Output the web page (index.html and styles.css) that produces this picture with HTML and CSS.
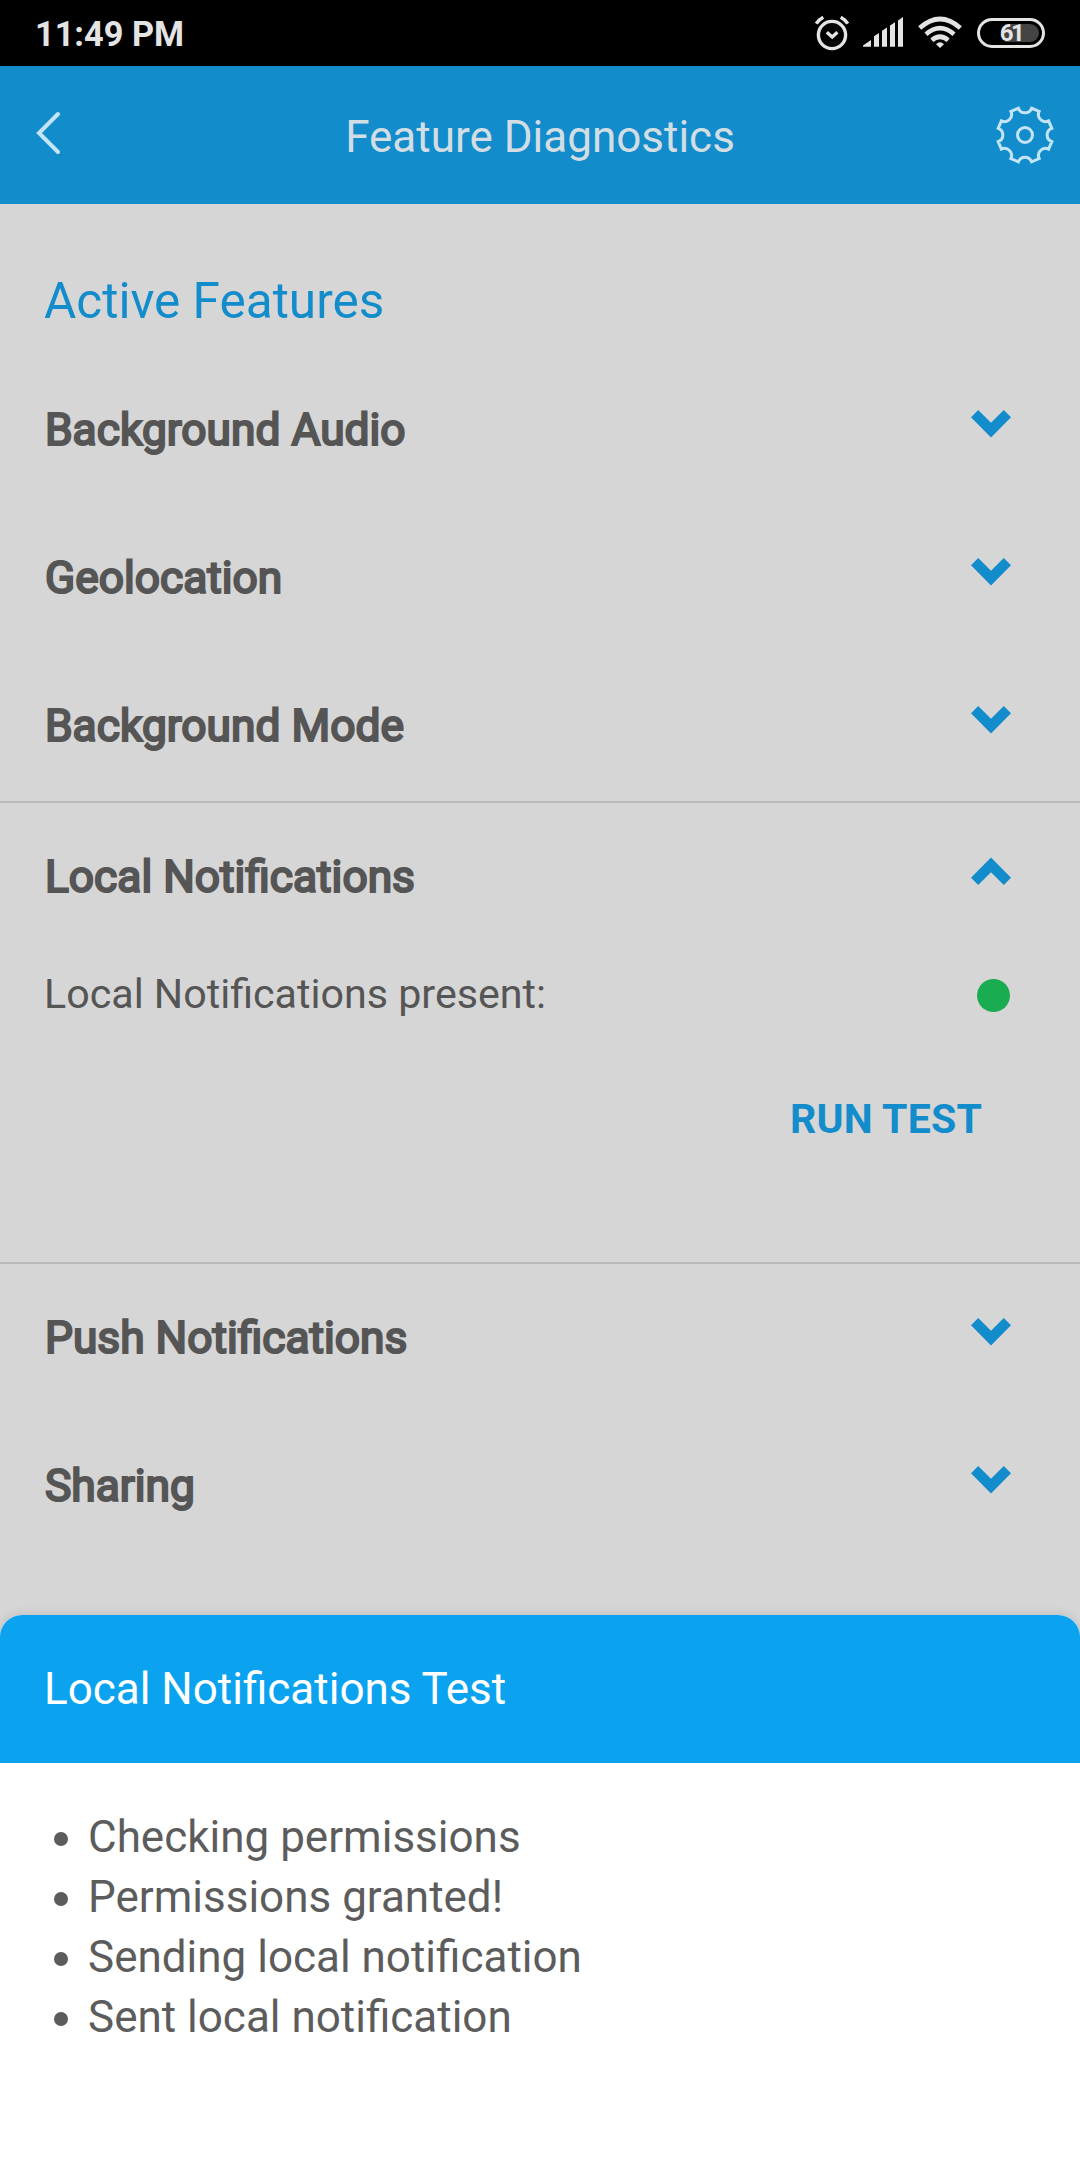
FILE: index.html
```html
<!DOCTYPE html>
<html lang="en">
  <head>
    <meta charset="UTF-8" />
    <meta name="viewport" content="width=device-width, initial-scale=1.0" />
    <title>Feature Diagnostics</title>
    <link rel="stylesheet" href="styles.css">
  </head>
  <body>
    <div class="status-bar">
      <span class="time">11:49 PM</span>
      <div class="status-icons">
        <svg class="alarm" width="36" height="36" viewBox="0 0 36 36">
          <circle cx="18" cy="20" r="13.6" />
          <path d="M2.2 8.6Q5 4.5 9.3 2.2M33.8 8.6Q31 4.5 26.7 2.2" />
          <path d="M12.8 17.2l5.4 4.8 5.2-4.8" />
        </svg>
        <svg class="signal" width="40" height="36" viewBox="0 0 40 36">
          <path d="M0 31.7V30.5L8 25v6.7zM11 31.7V21.2l5-3.2v13.7zM19 31.7V15.8l5-3.3v19.2zM27 31.7V10.5l5-3.3v24.5zM35 31.7V5.5l5-3.5v29.7z" />
        </svg>
        <svg class="wifi" width="44" height="36" viewBox="0 0 44 36">
          <path d="M1.7 13Q22-5 42.3 13" />
          <path d="M8 19.3Q22 7 36 19.3" />
          <path d="M13.8 25.2Q22 18.3 30.2 25.2" />
          <path class="dot" d="M18 29.3Q22 25.2 26 29.3L22 33z" />
        </svg>
        <div class="battery">
          <div class="level"></div>
          <span class="percent">61</span>
        </div>
      </div>
    </div>

    <header class="toolbar">
      <svg class="back" width="26" height="44" viewBox="0 0 26 44">
        <path d="M23 3L4 22l19 19" />
      </svg>
      <h1>Feature Diagnostics</h1>
      <svg class="settings" width="60" height="60" viewBox="-30 -30 60 60">
        <path d="M6.6-26.8L14.2-23.6A7 7 0 0 0 23.6-14.2L26.8-6.6A7 7 0 0 0 26.8 6.6L23.6 14.2A7 7 0 0 0 14.2 23.6L6.6 26.8A7 7 0 0 0-6.6 26.8L-14.2 23.6A7 7 0 0 0-23.6 14.2L-26.8 6.6A7 7 0 0 0-26.8-6.6L-23.6-14.2A7 7 0 0 0-14.2-23.6L-6.6-26.8A7 7 0 0 0 6.6-26.8z" />
        <circle r="7.5" />
      </svg>
    </header>

    <main>
      <h2>Active Features</h2>
      <div class="feature">
        <h3>Background Audio</h3>
        <svg class="chevron" width="40" height="28" viewBox="0 0 40 28"><path d="M0 7.2L7.2 0 20 12.8 32.8 0 40 7.2 20 27.5z" /></svg>
      </div>
      <div class="feature">
        <h3>Geolocation</h3>
        <svg class="chevron" width="40" height="28" viewBox="0 0 40 28"><path d="M0 7.2L7.2 0 20 12.8 32.8 0 40 7.2 20 27.5z" /></svg>
      </div>
      <div class="feature">
        <h3>Background Mode</h3>
        <svg class="chevron" width="40" height="28" viewBox="0 0 40 28"><path d="M0 7.2L7.2 0 20 12.8 32.8 0 40 7.2 20 27.5z" /></svg>
      </div>
      <section class="open">
        <div class="feature">
          <h3>Local Notifications</h3>
          <svg class="chevron up" width="40" height="28" viewBox="0 0 40 28"><path d="M0 7.2L7.2 0 20 12.8 32.8 0 40 7.2 20 27.5z" /></svg>
        </div>
        <div class="check">
          <span class="label">Local Notifications present:</span>
          <span class="light"></span>
        </div>
        <div class="actions">
          <button type="button">RUN TEST</button>
        </div>
      </section>
      <div class="feature">
        <h3>Push Notifications</h3>
        <svg class="chevron" width="40" height="28" viewBox="0 0 40 28"><path d="M0 7.2L7.2 0 20 12.8 32.8 0 40 7.2 20 27.5z" /></svg>
      </div>
      <div class="feature">
        <h3>Sharing</h3>
        <svg class="chevron" width="40" height="28" viewBox="0 0 40 28"><path d="M0 7.2L7.2 0 20 12.8 32.8 0 40 7.2 20 27.5z" /></svg>
      </div>
    </main>

    <div class="sheet">
      <div class="sheet-title">Local Notifications Test</div>
      <ul>
        <li>Checking permissions</li>
        <li>Permissions granted!</li>
        <li>Sending local notification</li>
        <li>Sent local notification</li>
      </ul>
    </div>
  </body>
</html>
```

FILE: styles.css
```css
* {
  box-sizing: border-box;
}
body {
  position: relative;
  height: 2160px;
  margin: 0;
  overflow: hidden;
  background-color: #d6d6d6;
  color: #555555;
  font-family: Roboto, sans-serif;
}
h1,
h2,
h3 {
  margin: 0;
  font-weight: 400;
}
.status-bar {
  display: flex;
  justify-content: space-between;
  align-items: center;
  height: 66px;
  padding: 0 35px;
  background-color: #000000;
  color: #e4e4e4;
}
.time {
  padding-top: 1px;
  font-size: 34.3px;
  font-weight: 700;
}
.status-icons {
  display: flex;
  align-items: center;
}
.status-icons svg {
  fill: none;
  stroke: #e4e4e4;
  stroke-width: 3;
}
.status-icons .alarm {
  margin-right: 13px;
  stroke-width: 3.4;
}
.status-icons .signal,
.status-icons .dot {
  fill: #e4e4e4;
  stroke: none;
}
.wifi {
  margin: 0 15px 0 15px;
}
.wifi path {
  stroke-width: 4.6;
}
.battery {
  position: relative;
  display: flex;
  align-items: center;
  justify-content: center;
  width: 68px;
  height: 30px;
  border: 3px solid #e4e4e4;
  border-radius: 15px;
}
.level {
  position: absolute;
  top: 3px;
  right: 3px;
  width: 34px;
  height: 18px;
  border-radius: 0 9px 9px 0;
  background-color: #444444;
}
.percent {
  position: relative;
  font-size: 24px;
  font-weight: 700;
  line-height: 24px;
  letter-spacing: -2.5px;
}
.toolbar {
  display: flex;
  justify-content: space-between;
  align-items: center;
  height: 138px;
  padding: 0 25px 0 35px;
  background-color: #138ccb;
  color: #d2dde4;
}
.toolbar svg {
  fill: none;
  stroke: #c4e4f8;
  stroke-width: 3;
}
.toolbar .back {
  margin: 0 24px 4px 0;
  stroke-width: 4;
  stroke-linecap: round;
}
.toolbar h1 {
  padding-top: 3px;
  font-size: 44px;
}
h2 {
  height: 152px;
  padding: 67px 44px 0;
  color: #138ccb;
  font-size: 49.5px;
  line-height: 60px;
}
.feature {
  display: flex;
  justify-content: space-between;
  align-items: center;
  height: 148px;
  padding: 0 69px 0 45px;
}
.feature h3 {
  font-size: 44.3px;
  line-height: 52px;
  -webkit-text-stroke: 2.2px #555555;
}
.chevron {
  margin-bottom: 13px;
  fill: #138ccb;
}
.up {
  transform: scaleY(-1);
}
.open {
  height: 463px;
  margin-top: 1px;
  border-top: 2px solid #bbbbbb;
  border-bottom: 2px solid #bbbbbb;
}
.check {
  display: flex;
  justify-content: space-between;
  align-items: center;
  height: 88px;
  padding: 0 70px 0 44px;
  font-size: 41.2px;
}
.label {
  padding-bottom: 2px;
}
.light {
  width: 33px;
  height: 33px;
  border-radius: 50%;
  background-color: #1aac50;
}
.actions {
  display: flex;
  justify-content: flex-end;
  padding: 50px 98px 0 0;
}
.actions button {
  padding: 0;
  border: none;
  background: none;
  color: #138ccb;
  font-family: inherit;
  font-size: 41px;
  font-weight: 700;
  line-height: 60px;
  letter-spacing: 0.2px;
}
.sheet {
  position: absolute;
  right: 0;
  bottom: 0;
  left: 0;
  height: 545px;
  overflow: hidden;
  border-radius: 22px 22px 0 0;
  background-color: #ffffff;
  box-shadow: 0 0 12px rgba(0, 0, 0, 0.12);
  color: #5c5c5c;
  font-size: 44px;
}
.sheet-title {
  height: 148px;
  padding-left: 44px;
  background-color: #0ba3ef;
  color: #ffffff;
  line-height: 148px;
}
.sheet ul {
  margin: 44px 0 0;
  padding-left: 88px;
  line-height: 60px;
}
```
